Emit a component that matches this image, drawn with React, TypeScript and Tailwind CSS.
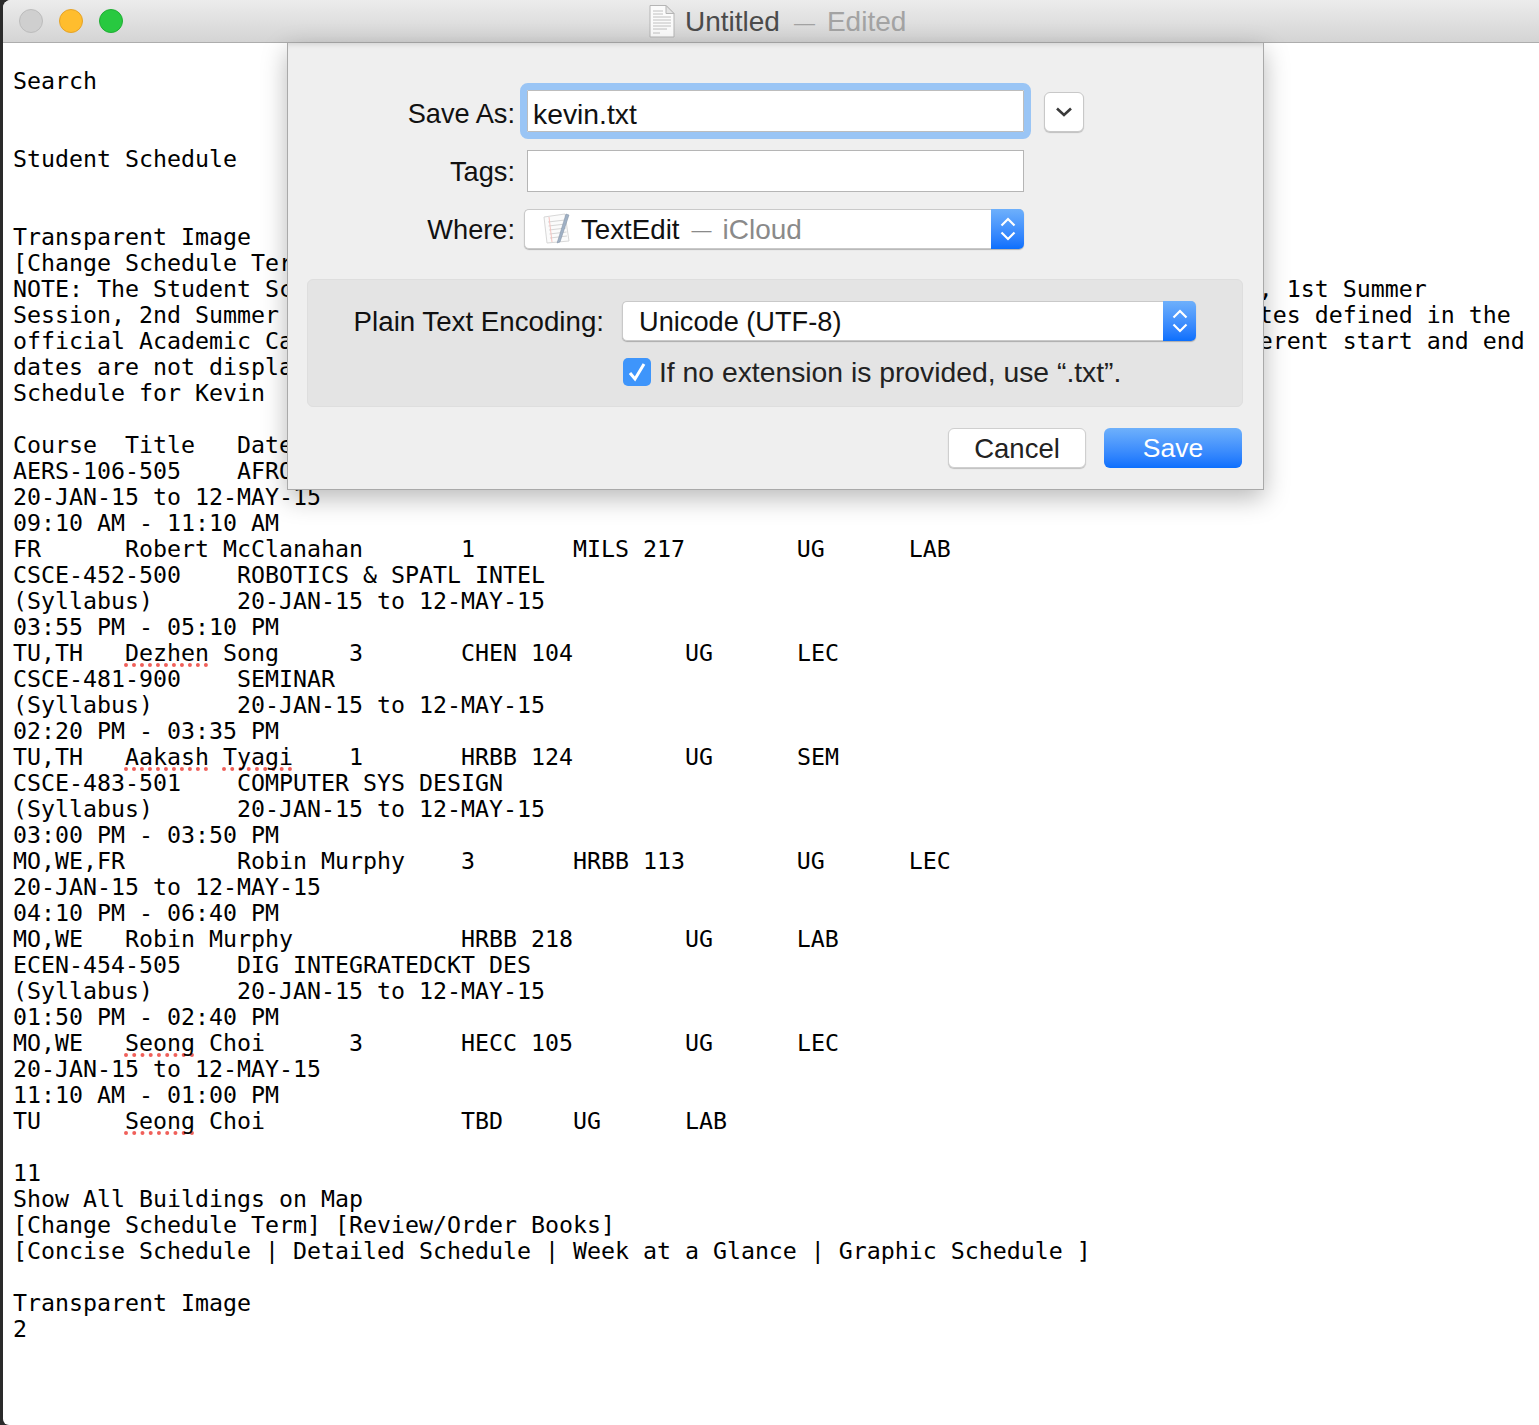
import React from 'react';

const sans = "font-['Liberation_Sans',Arial,sans-serif]";

// red spell-check dots under a word
const Typo = ({ children }: { children: React.ReactNode }) => (
  <span className="underline decoration-dotted decoration-[#f0605a] decoration-[4px] underline-offset-[2px] [text-decoration-skip-ink:none]">
    {children}
  </span>
);

const Stepper = () => (
  <div className="w-[33px] h-full rounded-r-[5px] bg-gradient-to-b from-[#6eb0fb] to-[#0a6ffd] flex items-center justify-center">
    <svg width="20" height="28" viewBox="0 0 20 28" fill="none" stroke="white" strokeWidth="2.2">
      <path d="M3.5 10.5 L10 4 L16.5 10.5" />
      <path d="M3.5 17.5 L10 24 L16.5 17.5" />
    </svg>
  </div>
);

const DocIcon = () => (
  <svg width="26" height="34" viewBox="0 0 26 34">
    <path d="M1 1.5 H17 L25 9.5 V33 H1 Z" fill="#fbfbfb" stroke="#b5b5b5" />
    <path d="M17 1.5 V9.5 H25 Z" fill="#e4e4e4" stroke="#b5b5b5" />
    <path
      d="M4 7 H14 M4 10 H14 M4 13 H22 M4 16 H22 M4 19 H22 M4 22 H22 M4 25 H18 M4 29 H11"
      stroke="#c0c0c0"
      strokeWidth="1"
    />
  </svg>
);

const TextEditIcon = () => (
  <svg width="28" height="32" viewBox="0 0 28 32">
    <path d="M1 4 L22 1 L26 28 L4 30 Z" fill="#fbfbfb" stroke="#d8d8d8" />
    <path d="M5 9 L22 7 M5.5 13 L22.5 11 M6 17 L23 15 M6.5 21 L23.5 19 M7 25 L24 23" stroke="#d6d6d6" />
    <path d="M6 4 L9 29" stroke="#f4c4c0" />
    <path d="M23 1 L26 2 L17 29 L14 30 L15 27 Z" fill="#9fb0c4" stroke="#7f8fa2" strokeWidth="0.5" />
  </svg>
);

const lines: React.ReactNode[] = [
  'Search',
  '',
  '',
  'Student Schedule',
  '',
  '',
  'Transparent Image',
  '[Change Schedule Term]',
  'NOTE: The Student Schedule'.padEnd(89) + ', 1st Summer',
  'Session, 2nd Summer'.padEnd(89) + 'tes defined in the',
  'official Academic Calendar'.padEnd(89) + 'erent start and end',
  'dates are not displayed',
  'Schedule for Kevin',
  '',
  'Course  Title   Date',
  'AERS-106-505    AFRO',
  '20-JAN-15 to 12-MAY-15',
  '09:10 AM - 11:10 AM',
  'FR      Robert McClanahan       1       MILS 217        UG      LAB',
  'CSCE-452-500    ROBOTICS & SPATL INTEL',
  '(Syllabus)      20-JAN-15 to 12-MAY-15',
  '03:55 PM - 05:10 PM',
  <>TU,TH   <Typo>Dezhen</Typo> Song     3       CHEN 104        UG      LEC</>,
  'CSCE-481-900    SEMINAR',
  '(Syllabus)      20-JAN-15 to 12-MAY-15',
  '02:20 PM - 03:35 PM',
  <>TU,TH   <Typo>Aakash</Typo> <Typo>Tyagi</Typo>    1       HRBB 124        UG      SEM</>,
  'CSCE-483-501    COMPUTER SYS DESIGN',
  '(Syllabus)      20-JAN-15 to 12-MAY-15',
  '03:00 PM - 03:50 PM',
  'MO,WE,FR        Robin Murphy    3       HRBB 113        UG      LEC',
  '20-JAN-15 to 12-MAY-15',
  '04:10 PM - 06:40 PM',
  'MO,WE   Robin Murphy            HRBB 218        UG      LAB',
  'ECEN-454-505    DIG INTEGRATEDCKT DES',
  '(Syllabus)      20-JAN-15 to 12-MAY-15',
  '01:50 PM - 02:40 PM',
  <>MO,WE   <Typo>Seong</Typo> Choi      3       HECC 105        UG      LEC</>,
  '20-JAN-15 to 12-MAY-15',
  '11:10 AM - 01:00 PM',
  <>TU      <Typo>Seong</Typo> Choi              TBD     UG      LAB</>,
  '',
  '11',
  'Show All Buildings on Map',
  '[Change Schedule Term] [Review/Order Books]',
  '[Concise Schedule | Detailed Schedule | Week at a Glance | Graphic Schedule ]',
  '',
  'Transparent Image',
  '2',
];

export default function App() {
  return (
    <div className="relative w-[1539px] h-[1425px] bg-[#2a2a2a] overflow-hidden">
      <div className="ml-[3px] h-full bg-white rounded-tl-[8px] rounded-bl-[6px] overflow-hidden flex flex-col">
        {/* Title bar */}
        <div className="h-[43px] shrink-0 bg-gradient-to-b from-[#ececec] to-[#d4d4d4] border-b border-[#adadad] flex items-center relative">
          <div className="flex items-center gap-4 pl-4">
            <div className="w-6 h-6 rounded-full bg-[#cfcfcf] border border-[#bcbcbc]" />
            <div className="w-6 h-6 rounded-full bg-[#ffbd2e] border border-[#e5a328]" />
            <div className="w-6 h-6 rounded-full bg-[#28c940] border border-[#1fae33]" />
          </div>
          <div className={`${sans} ml-[526px] flex items-center text-[28px] leading-none`}>
            <DocIcon />
            <span className="ml-[10px] pt-[2px] text-[#4b4b4b]">Untitled</span>
            <span className="ml-[14px] pt-[2px] text-[21px] text-[#a3a3a3]">—</span>
            <span className="ml-[12px] pt-[2px] text-[#a3a3a3]">Edited</span>
          </div>
        </div>

        {/* Document text */}
        <div className="pt-[25px] pl-[10px] font-['DejaVu_Sans_Mono',monospace] text-[23.25px] leading-[26px] text-black whitespace-pre">
          {lines.map((line, i) => (
            <div key={i} className="h-[26px]">
              {line}
            </div>
          ))}
        </div>
      </div>

      {/* Save sheet */}
      <div
        className={`${sans} absolute left-[287px] top-[43px] w-[977px] h-[447px] bg-[#efefef] border-x border-b border-[#a9a9a9] shadow-[0_8px_24px_rgba(0,0,0,0.28),inset_0_7px_7px_-7px_rgba(0,0,0,0.18)] text-[27.2px] leading-none text-[#111]`}
      >
        <div className="pt-[47px] flex items-start h-[89px]">
          <div className="w-[227px] text-right leading-[48px]">Save As:</div>
          <div className="ml-[12px] w-[497px] h-[42px] bg-white border border-[#bdbdbd] outline-[7px] outline-[#9ac5f5] rounded-[1px] pl-[5px] text-[28.3px] leading-[46px]">
            kevin.txt
          </div>
          <button className="ml-[20px] mt-[2px] w-[40px] h-[40px] bg-white border border-[#c8c8c8] rounded-[6px] shadow-[0_1px_1px_rgba(0,0,0,0.2)] flex items-center justify-center">
            <svg width="18" height="12" viewBox="0 0 18 12" fill="none" stroke="#3a3a3a" strokeWidth="2.6">
              <path d="M2 2.5 L9 9 L16 2.5" />
            </svg>
          </button>
        </div>

        <div className="mt-[18px] flex items-center h-[42px]">
          <div className="w-[227px] text-right pt-[2px]">Tags:</div>
          <div className="ml-[12px] w-[497px] h-[42px] bg-white border border-[#b5b5b5]" />
        </div>

        <div className="mt-[17px] flex items-center h-[40px]">
          <div className="w-[227px] text-right pt-[2px]">Where:</div>
          <div className="ml-[9px] w-[500px] h-[40px] bg-white rounded-[5px] border border-[#c9c9c9] border-r-0 shadow-[0_1px_1px_rgba(0,0,0,0.25)] flex items-center">
            <div className="ml-[18px] w-[28px]">
              <TextEditIcon />
            </div>
            <span className="ml-[10px] pt-[2px] text-[27.7px] text-[#111]">TextEdit</span>
            <span className="ml-[12px] pt-[2px] text-[20px] text-[#8a8a8a]">—</span>
            <span className="ml-[11px] pt-[2px] text-[28px] text-[#8a8a8a]">iCloud</span>
            <div className="ml-auto h-[40px] -my-px">
              <Stepper />
            </div>
          </div>
        </div>

        <div className="mt-[30px] ml-[19px] w-[936px] h-[128px] bg-[#e4e4e4] rounded-[6px] border border-[#dedede]">
          <div className="pt-[21px] flex items-center">
            <div className="w-[296px] text-right pt-[2px] text-[27.7px]">Plain Text Encoding:</div>
            <div className="ml-[18px] w-[574px] h-[40px] bg-white rounded-[5px] border border-[#c9c9c9] border-r-0 shadow-[0_1px_1px_rgba(0,0,0,0.25)] flex items-center">
              <span className="ml-[16px] pt-[2px]">Unicode (UTF-8)</span>
              <div className="ml-auto h-[40px] -my-px">
                <Stepper />
              </div>
            </div>
          </div>
          <div className="mt-[16px] ml-[315px] flex items-center">
            <div className="w-[28px] h-[28px] rounded-[5px] bg-[#3e95fb] flex items-center justify-center">
              <svg width="20" height="20" viewBox="0 0 20 20" fill="none" stroke="white" strokeWidth="3">
                <path d="M3 11 L8 17 L17 2" />
              </svg>
            </div>
            <span className="ml-[8px] text-[28.3px] leading-[30px] text-[#222]">If no extension is provided, use “.txt”.</span>
          </div>
        </div>

        <div className="mt-[21px] flex justify-end gap-[18px] pr-[21px]">
          <button className="w-[138px] h-[40px] pt-[1px] bg-white border border-[#cfcfcf] rounded-[6px] shadow-[0_1px_1px_rgba(0,0,0,0.2)] text-[27.5px] leading-none text-[#222]">
            Cancel
          </button>
          <button className="w-[138px] h-[40px] pt-[1px] rounded-[6px] bg-gradient-to-b from-[#6eb0fb] to-[#0a6ffd] text-[26.5px] leading-none text-white">
            Save
          </button>
        </div>
      </div>
    </div>
  );
}
